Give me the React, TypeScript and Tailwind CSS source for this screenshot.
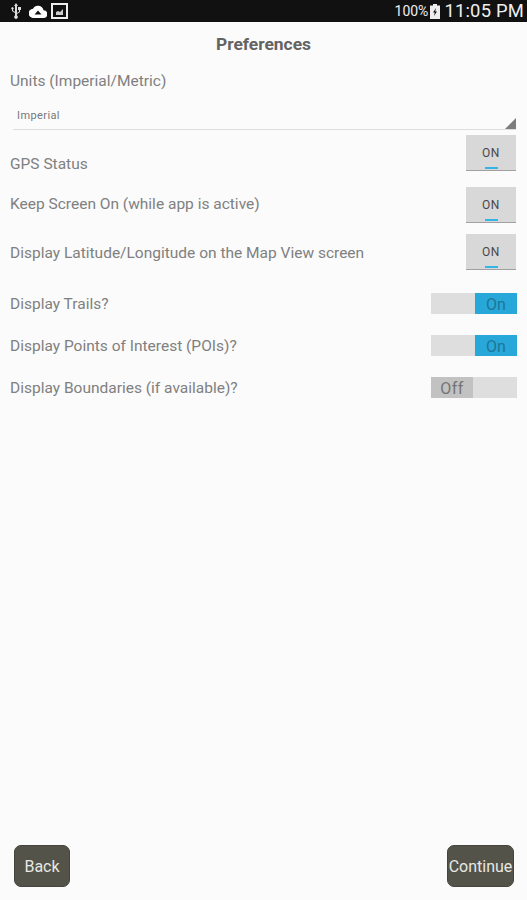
const font = { fontFamily: 'Roboto, sans-serif' }

function ToggleButton() {
  return (
    <div className="w-[50px] h-[36px] bg-[#d8d8d8] border-b border-[#a0a0a0] flex flex-col items-center justify-center relative">
      <span className="text-[12px] leading-none text-[#484848] tracking-[0.5px]">ON</span>
      <span className="absolute bottom-[1px] w-[13px] h-[2px] bg-[#33b5e5]" />
    </div>
  )
}

function Switch({ on }: { on: boolean }) {
  return (
    <div className={`w-[86px] h-[21px] bg-[#dedede] flex ${on ? 'justify-end' : 'justify-start'}`}>
      {on ? (
        <div className="w-[42px] h-full bg-[#28a8d8] pt-[2px] flex items-center justify-center text-[16px] text-[#1f7596]">On</div>
      ) : (
        <div className="w-[42px] h-full bg-[#c2c2c2] pt-[2px] flex items-center justify-center text-[16px] text-[#747474] tracking-[0.5px]">Off</div>
      )}
    </div>
  )
}

function NavButton({ label, className = '' }: { label: string; className?: string }) {
  return (
    <button className={`h-[42px] rounded-[7px] bg-[#53534a] border border-[#45453d] text-[#e8e8e2] text-[16px] pt-[2px] flex items-center justify-center ${className}`}>
      {label}
    </button>
  )
}

export default function App() {
  const labelClass = 'text-[15.5px] text-[#808080]'
  return (
    <div className="w-[527px] h-[900px] bg-[#fbfbfb] flex flex-col overflow-hidden" style={font}>
      {/* Status bar */}
      <div className="h-[22px] bg-[#111] flex items-center justify-between pl-[10px] pr-[3px] shrink-0">
        <div className="flex items-center gap-[7px]">
          <svg width="12" height="16" viewBox="0 0 12 16" fill="#ddd">
            <path d="M6 0 8 3H7v7l2-1.500V7H8V4h3v3h-1v2L7 11v1.500a1.800 1.800 0 1 1-2 0V10L2 8V6.500a1.200 1.200 0 1 1 1 0V7.500l2 1.500V3H4z" />
          </svg>
          <svg width="18" height="13" viewBox="0 0 18 13" fill="#fff">
            <path d="M14.500 5.200A5.600 5.600 0 0 0 4 3.800 4.500 4.500 0 0 0 4.500 13h9.800a3.900 3.900 0 0 0 .2-7.800zM9 5.500 5.500 9.500h7z" fillRule="evenodd" />
          </svg>
          <svg className="-ml-[3px]" width="17" height="16" viewBox="0 0 17 16">
            <rect x="1" y="1" width="15" height="14" fill="none" stroke="#eee" strokeWidth="2" />
            <path d="M5 12V9l2-1 2 1 3-3v6z" fill="#ccc" />
          </svg>
        </div>
        <div className="flex items-center text-[#eee]">
          <span className="text-[14px] leading-none">100%</span>
          <svg className="ml-[2px] mr-[4px]" width="10" height="15" viewBox="0 0 10 15" fill="#eee">
            <path d="M3 0h4v1.500h3V15H0V1.500h3zM6 4 3 8.500h1.800L4 12l3-4.500H5.200z" fillRule="evenodd" />
          </svg>
          <span className="text-[18.4px] leading-none tracking-[0.2px]">11:05 PM</span>
        </div>
      </div>

      {/* Title */}
      <h1 className="mt-[12px] text-center text-[17.4px] leading-[20px] font-bold text-[#636363]">Preferences</h1>

      {/* Units */}
      <p className={`mt-[17px] pl-[10px] leading-[20px] ${labelClass}`}>Units (Imperial/Metric)</p>
      <div className="mt-[14px] ml-[13px] mr-[11px] h-[25px] border-b border-[#dddddd] relative flex items-center pl-[4px]">
        <span className="text-[11px] text-[#777] tracking-[0.4px] -mt-[2px]">Imperial</span>
        <span className="absolute right-0 bottom-0 w-[11px] h-[11px] bg-[#7d7d7d] [clip-path:polygon(100%_0,100%_100%,0_100%)]" />
      </div>

      {/* Toggle rows */}
      <div className="mt-[5px] flex items-center justify-between pl-[10px] pr-[11px] h-[36px]">
        <span className={`${labelClass} mt-[24px]`}>GPS Status</span>
        <ToggleButton />
      </div>
      <div className="mt-[16px] flex items-center justify-between pl-[10px] pr-[11px] h-[36px]">
        <span className={labelClass}>Keep Screen On (while app is active)</span>
        <ToggleButton />
      </div>
      <div className="mt-[11px] flex items-center justify-between pl-[10px] pr-[11px] h-[36px]">
        <span className={`${labelClass} mt-[3px]`}>Display Latitude/Longitude on the Map View screen</span>
        <ToggleButton />
      </div>

      {/* Switch rows */}
      <div className="mt-[23px] flex items-center justify-between pl-[10px] pr-[10px] h-[21px]">
        <span className={`${labelClass} mt-[2px]`}>Display Trails?</span>
        <Switch on />
      </div>
      <div className="mt-[21px] flex items-center justify-between pl-[10px] pr-[10px] h-[21px]">
        <span className={`${labelClass} mt-[3px]`}>Display Points of Interest (POIs)?</span>
        <Switch on />
      </div>
      <div className="mt-[21px] flex items-center justify-between pl-[10px] pr-[10px] h-[21px]">
        <span className={`${labelClass} mt-[2px]`}>Display Boundaries (if available)?</span>
        <Switch on={false} />
      </div>

      {/* Bottom buttons */}
      <div className="mt-auto mb-[13px] flex justify-between pl-[14px] pr-[13px]">
        <NavButton label="Back" className="w-[56px]" />
        <NavButton label="Continue" className="w-[67px]" />
      </div>
    </div>
  )
}
